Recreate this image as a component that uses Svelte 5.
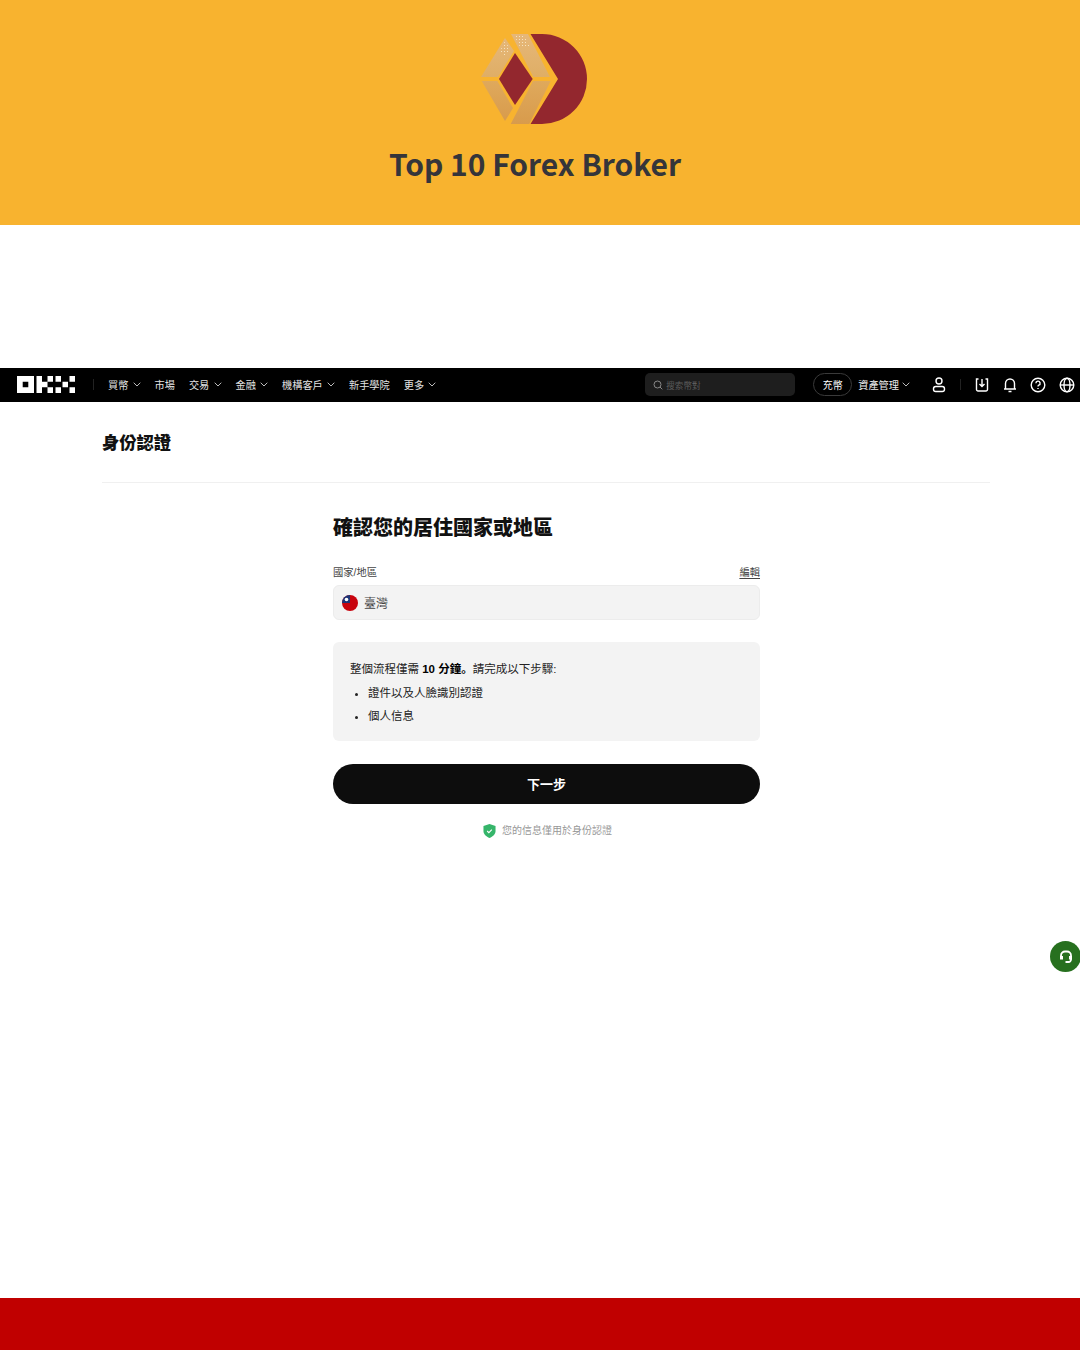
<script>
	const navItems = [
		{ label: '買幣', caret: true },
		{ label: '市場', caret: false },
		{ label: '交易', caret: true },
		{ label: '金融', caret: true },
		{ label: '機構客戶', caret: true },
		{ label: '新手學院', caret: false },
		{ label: '更多', caret: true }
	];
	const steps = ['證件以及人臉識別認證', '個人信息'];
</script>

<div class="page">
	<header class="banner">
		<svg class="brand" viewBox="0 0 110 92" width="110" height="92" aria-hidden="true">
			<defs>
				<linearGradient id="upper" x1="0" y1="0" x2="0" y2="1">
					<stop offset="0" stop-color="#e6b778" />
					<stop offset="1" stop-color="#dfae66" />
				</linearGradient>
				<linearGradient id="lower" x1="0" y1="0" x2="0" y2="1">
					<stop offset="0" stop-color="#dfa95c" />
					<stop offset="1" stop-color="#d89b4c" />
				</linearGradient>
				<pattern id="dots" width="3" height="3" patternUnits="userSpaceOnUse">
					<rect width="1" height="1" fill="#f6e3c0" />
				</pattern>
			</defs>
			<path d="M50.5 1H62A45 45 0 0 1 62 91H50.5L78 46Z" fill="#93272e" />
			<path d="M35 20 52.700 46 35 72 19 46Z" fill="#93272e" />
			<path d="M25 5 34 18 18 44H1Z" fill="url(#upper)" />
			<path d="M31 1H48L70 44H53.300Z" fill="url(#upper)" />
			<path d="M1.700 48H17.300L33 75 25 88Z" fill="url(#lower)" />
			<path d="M53 48H70.700L49.300 91H30.700Z" fill="url(#lower)" />
			<path d="M25 8 30 16 25 24 20 18ZM34 2H44L50 14H40Z" fill="url(#dots)" />
		</svg>
		<h2>Top 10 Forex Broker</h2>
	</header>

	<div class="gap"></div>

	<nav class="topnav">
		<svg class="okx" viewBox="0 0 58 17" width="58" height="17" aria-hidden="true">
			<path fill="#fff" fill-rule="evenodd" d="M0 0H17V17H0ZM5.700 5.700V11.300H11.300V5.700Z" />
			<path fill="#fff" d="M19.500 0H25V17H19.500ZM25 5.700H30.500V11.300H25ZM30.500 0H36V5.700H30.500ZM30.500 11.300H36V17H30.500Z" />
			<path fill="#fff" d="M38.500 0H44V5.700H38.500ZM52.500 0H58V5.700H52.500ZM45.500 5.700H51V11.300H45.500ZM38.500 11.300H44V17H38.500ZM52.500 11.300H58V17H52.500Z" />
		</svg>
		<span class="rule"></span>
		<ul class="links">
			{#each navItems as item (item.label)}
				<li>
					{item.label}
					{#if item.caret}
						<svg class="caret" viewBox="0 0 8 5" width="8" height="5"><path d="M.7.7 4 4 7.300.7" /></svg>
					{/if}
				</li>
			{/each}
		</ul>
		<div class="search">
			<svg viewBox="0 0 10 10" width="10" height="10"><circle cx="4.500" cy="4.500" r="3.500" /><path d="m7 7 2.300 2.300" /></svg>
			<span>搜索幣對</span>
		</div>
		<button class="deposit">充幣</button>
		<span class="assets">資產管理
			<svg class="caret" viewBox="0 0 8 5" width="8" height="5"><path d="M.7.7 4 4 7.300.7" /></svg>
		</span>
		<svg class="icon user" viewBox="0 0 14 16" width="14" height="16">
			<circle cx="7" cy="4" r="3" />
			<rect x="1.500" y="9.500" width="11" height="5" rx="2.200" />
		</svg>
		<span class="rule right"></span>
		<svg class="icon tray" viewBox="0 0 14 16" width="14" height="16">
			<path d="M3.500 2H1.500V12.500A1.500 1.500 0 0 0 3 14H11A1.500 1.500 0 0 0 12.500 12.500V2H10.500M7 2V9.500M4.500 7 7 9.500 9.500 7" />
		</svg>
		<svg class="icon" viewBox="0 0 14 16" width="14" height="16">
			<path d="M2.500 12V6.500A4.500 4.500 0 0 1 11.500 6.500V12ZM1 12H13M5.500 14.500H8.500" />
		</svg>
		<svg class="icon" viewBox="0 0 16 16" width="16" height="16">
			<circle cx="8" cy="8" r="6.800" />
			<path d="M5.900 6.200A2.100 2.100 0 1 1 8.800 8.200C8.200 8.500 8 8.900 8 9.600M8 11V12" />
		</svg>
		<svg class="icon" viewBox="0 0 16 16" width="16" height="16">
			<circle cx="8" cy="8" r="6.800" />
			<ellipse cx="8" cy="8" rx="3" ry="6.800" />
			<path d="M1.200 8H14.800" />
		</svg>
	</nav>

	<main class="content">
		<div class="pagehead">身份認證</div>
		<section class="form">
			<h1>確認您的居住國家或地區</h1>
			<div class="labelrow">
				<span>國家/地區</span>
				<span class="edit">編輯</span>
			</div>
			<div class="field">
				<svg viewBox="0 0 16 16" width="16" height="16" aria-hidden="true">
					<circle cx="8" cy="8" r="8" fill="#c8040e" />
					<path d="M8 0A8 8 0 0 0 0 8H8Z" fill="#1c3578" />
					<circle cx="4.500" cy="4.500" r="1.800" fill="#fff" />
				</svg>
				<span>臺灣</span>
			</div>
			<div class="info">
				<p>整個流程僅需 <b>10 分鐘。</b>請完成以下步驟:</p>
				<ul>
					{#each steps as step (step)}
						<li>{step}</li>
					{/each}
				</ul>
			</div>
			<button class="next">下一步</button>
			<div class="note">
				<svg viewBox="0 0 14 15" width="13" height="14" aria-hidden="true">
					<path d="M7 0 13.500 2V7.500C13.500 11 10.500 13.500 7 15 3.500 13.500.5 11 .5 7.500V2Z" fill="#35b56a" />
					<path d="M4.500 7.500 6.300 9.300 9.500 6" fill="none" stroke="#fff" stroke-width="1.200" />
				</svg>
				<span>您的信息僅用於身份認證</span>
			</div>
		</section>
	</main>

	<footer class="strip"></footer>

	<button class="support" aria-label="客服">
		<svg viewBox="0 0 16 16" width="16" height="16">
			<path d="M3 10V6.500A4 4 0 0 1 7 2.500H9A4 4 0 0 1 13 6.500V10" />
			<path d="M13 10V10.500A2.500 2.500 0 0 1 10.500 13H7.500" />
			<path class="pad" d="M2 7H5V10.500H2ZM11 7H14V10.500H11Z" />
		</svg>
	</button>
</div>

<style>
	:global(body) {
		background: #fff;
	}

	.page {
		position: relative;
		display: flex;
		flex-direction: column;
		width: 1080px;
		height: 1350px;
		overflow: hidden;
		font-family: 'Liberation Sans', 'Noto Sans CJK TC', sans-serif;
		color: #111;
	}

	.banner {
		height: 225px;
		flex-shrink: 0;
		box-sizing: border-box;
		padding: 33px 10px 0 0;
		background: #f8b32f;
		display: flex;
		flex-direction: column;
		align-items: center;
	}

	.brand {
		display: block;
	}

	.banner h2 {
		margin: 17px 0 0;
		font-family: 'Noto Sans CJK TC', 'Noto Sans', sans-serif;
		font-size: 30px;
		line-height: 42px;
		font-weight: 700;
		color: #35353a;
	}

	.gap {
		height: 143px;
		flex-shrink: 0;
	}

	.topnav {
		height: 34px;
		flex-shrink: 0;
		box-sizing: border-box;
		padding: 0 0 1px 17px;
		background: #000;
		color: #fff;
		display: flex;
		align-items: center;
		font-size: 10.200px;
	}

	.okx {
		display: block;
	}

	.rule {
		width: 1px;
		height: 11px;
		margin: 0 14px 0 18px;
		background: #222;
	}

	.links {
		list-style: none;
		display: flex;
		gap: 14px;
		margin: 0;
		padding: 0;
		flex: 1;
		color: #e4e4e4;
	}

	.links li {
		display: flex;
		align-items: center;
		gap: 4.200px;
	}

	.caret {
		fill: none;
		stroke: #bbb;
		stroke-width: 1;
	}

	.search {
		width: 150px;
		height: 23px;
		box-sizing: border-box;
		padding-left: 8px;
		margin-right: 18px;
		border-radius: 5px;
		background: #1e1e1e;
		color: #5c5c5c;
		display: flex;
		align-items: center;
		gap: 3px;
		font-size: 8.600px;
	}

	.search svg {
		fill: none;
		stroke: #888;
		stroke-width: 1;
	}

	.deposit {
		width: 39px;
		height: 23px;
		padding: 0;
		margin-right: 6px;
		border: 1px solid #3a3a3a;
		border-radius: 12px;
		background: #000;
		color: #fff;
		font: inherit;
		font-size: 10px;
	}

	.assets {
		display: flex;
		align-items: center;
		gap: 3px;
		margin-right: 22px;
		color: #eee;
	}

	.icon {
		flex-shrink: 0;
		fill: none;
		stroke: #fff;
		stroke-width: 1.400;
		margin-right: 13px;
	}

	.icon.tray {
		margin-right: 14px;
	}

	.rule.right {
		margin: 0 14px 0 1px;
	}

	.topnav .icon:last-child {
		margin-right: 5px;
	}

	.content {
		flex: 1;
		padding: 0 90px 0 102px;
	}

	.pagehead {
		height: 81px;
		box-sizing: border-box;
		padding-top: 28px;
		border-bottom: 1px solid #f0f0f0;
		font-size: 17.250px;
		line-height: 26px;
		font-weight: 900;
	}

	.form {
		width: 427px;
		margin-left: 231px;
	}

	.form h1 {
		margin: 30px 0 0;
		font-size: 20px;
		line-height: 30px;
		font-weight: 900;
	}

	.labelrow {
		display: flex;
		justify-content: space-between;
		margin-top: 19px;
		height: 21px;
		font-size: 10.300px;
		line-height: 22px;
		color: #444;
	}

	.edit {
		text-decoration: underline;
		text-underline-offset: 2px;
	}

	.field {
		height: 35px;
		box-sizing: border-box;
		padding-left: 8px;
		margin-top: 2px;
		background: #f3f3f3;
		border: 1px solid #ececec;
		border-radius: 6px;
		display: flex;
		align-items: center;
		gap: 6px;
		font-size: 12px;
		color: #444;
	}

	.info {
		height: 99px;
		box-sizing: border-box;
		margin-top: 22px;
		padding: 17px 17px 0;
		background: #f3f3f3;
		border-radius: 6px;
		font-size: 11.500px;
		line-height: 20px;
		color: #222;
	}

	.info p {
		margin: 0;
	}

	.info b {
		color: #000;
		font-family: 'Liberation Sans', 'Noto Sans CJK SC', sans-serif;
	}

	.info ul {
		margin: 3.500px 0 0;
		padding: 0 0 0 18px;
	}

	.info li {
		margin-bottom: 3.500px;
	}

	.next {
		display: block;
		width: 100%;
		height: 40px;
		margin-top: 23px;
		padding: 0 0 2px;
		border: none;
		border-radius: 20px;
		background: #0d0d0d;
		color: #fff;
		font: inherit;
		font-size: 13px;
		font-weight: 700;
	}

	.note {
		margin-top: 19px;
		padding-left: 2px;
		display: flex;
		justify-content: center;
		align-items: center;
		gap: 6px;
		font-size: 10px;
		line-height: 15px;
		color: #979797;
	}

	.strip {
		height: 52px;
		flex-shrink: 0;
		background: #c00000;
	}

	.support {
		position: absolute;
		left: 1050px;
		top: 941px;
		width: 31px;
		height: 31px;
		padding: 0;
		border: none;
		border-radius: 50%;
		background: #27701f;
		display: flex;
		align-items: center;
		justify-content: center;
	}

	.support svg {
		fill: none;
		stroke: #fff;
		stroke-width: 1.800;
	}

	.support .pad {
		fill: #fff;
		stroke: none;
	}
</style>
